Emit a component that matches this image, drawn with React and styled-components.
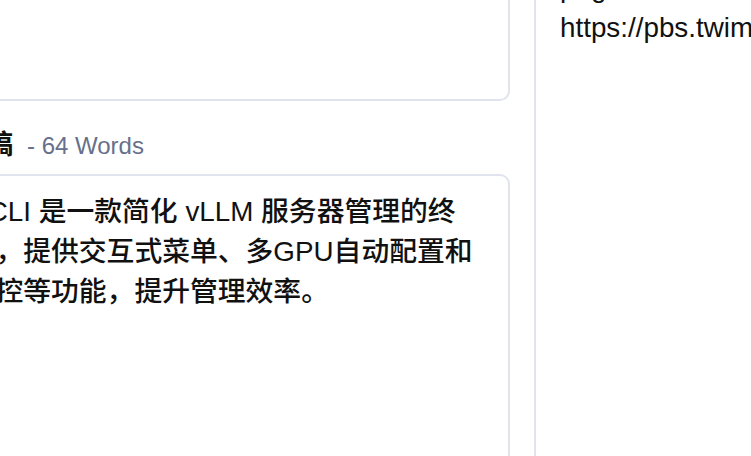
import styled, { createGlobalStyle } from "styled-components";

const colors = {
  text: "#111111",
  muted: "#67708b",
  border: "#e1e4ef",
  bg: "#ffffff",
};

const GlobalStyle = createGlobalStyle`
  html, body {
    margin: 0;
    padding: 0;
    background: ${colors.bg};
    overflow: hidden;
  }
  body {
    font-family: "Liberation Sans", "Noto Sans CJK SC", sans-serif;
    color: ${colors.text};
  }
  * {
    box-sizing: border-box;
  }
`;

// the view is scrolled: left column starts off-screen
const Layout = styled.div`
  display: flex;
  align-items: stretch;
  margin: -71px 0 0 -146px;
  min-height: 560px;
`;

const Main = styled.main`
  flex: 0 0 680px;
  display: flex;
  flex-direction: column;
  padding: 24px 24px 0;
`;

const Aside = styled.aside`
  flex: 0 0 440px;
  border-left: 2px solid ${colors.border};
  padding: 39px 24px 0;
  font-size: 27.8px;
  line-height: 40px;
  overflow: hidden;
`;

const Card = styled.section`
  border: 2px solid ${colors.border};
  border-radius: 10px;
  padding: 16px 32px;
  min-height: ${(props) => props.$minHeight || "auto"};
`;

const SectionHead = styled.div`
  display: flex;
  align-items: baseline;
  gap: 14px;
  margin: 24px 0 8px;
  line-height: 40px;
  white-space: nowrap;
`;

const SectionTitle = styled.h3`
  margin: 0;
  font-size: 27px;
  font-weight: 700;
`;

const WordCount = styled.span`
  font-size: 24px;
  color: ${colors.muted};
`;

const Summary = styled.p`
  margin: 0;
  font-size: 27.8px;
  font-weight: 500;
  line-height: 40px;
`;

const Line = styled.div`
  white-space: nowrap;
`;

export default function App() {
  return (
    <>
      <GlobalStyle />
      <Layout>
        <Main>
          <Card $minHeight="148px" />
          <SectionHead>
            <SectionTitle>中文摘要稿</SectionTitle>
            <WordCount>- 64 Words</WordCount>
          </SectionHead>
          <Card $minHeight="340px">
            <Summary>
              vLLM CLI 是一款简化 vLLM 服务器管理的终端工具，提供交互式菜单、多GPU自动配置和实时监控等功能，提升管理效率。
            </Summary>
          </Card>
        </Main>
        <Aside>
          <Line>page cover:</Line>
          <Line>https://pbs.twimg.com/media/GwR8vLLMcli.jpg</Line>
        </Aside>
      </Layout>
    </>
  );
}
